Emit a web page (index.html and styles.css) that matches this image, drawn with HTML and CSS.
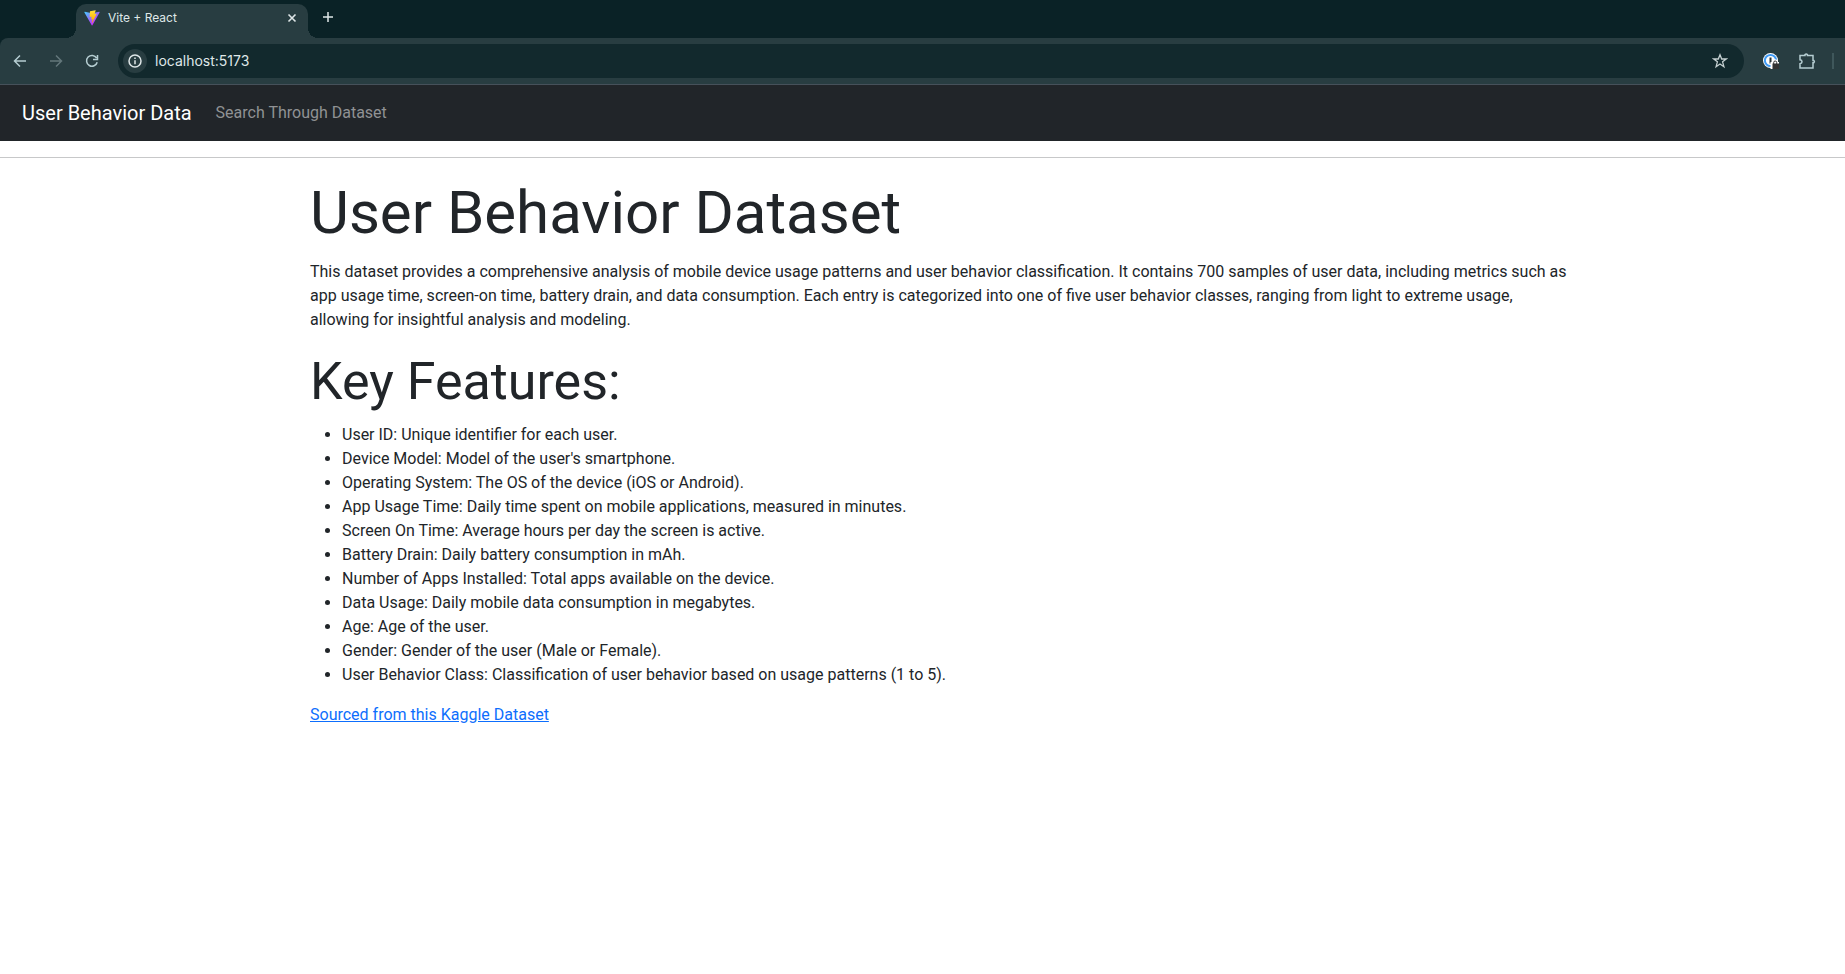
FILE: index.html
```html
<!DOCTYPE html>
<html lang="en">
<head>
<meta charset="utf-8">
<title>Vite + React</title>
<link rel="stylesheet" href="styles.css">
</head>
<body>
<header class="browser">
  <div class="tab-strip">
    <div class="tab">
      <svg class="tab-icon" width="16" height="16" viewBox="0 0 410 404" aria-hidden="true">
        <defs>
          <linearGradient id="v" x1="6" y1="33" x2="235" y2="344" gradientUnits="userSpaceOnUse"><stop stop-color="#41d1ff"/><stop offset="1" stop-color="#bd34fe"/></linearGradient>
          <linearGradient id="b" x1="194" y1="9" x2="236" y2="293" gradientUnits="userSpaceOnUse"><stop stop-color="#ffea83"/><stop offset=".08" stop-color="#ffdd35"/><stop offset="1" stop-color="#ffa800"/></linearGradient>
        </defs>
        <path fill="url(#v)" d="M399.6 59.5 215.6 388.5c-3.8 6.8-13.6 6.9-17.4.1L10.6 59.6c-4.3-7.4 2-16.4 10.4-14.9l184.1 32.9c1.2.2 2.4.2 3.5 0l180.3-32.8c8.4-1.5 14.8 7.4 10.7 14.7Z"/>
        <path fill="url(#b)" d="M293 1.6 156.800 28.200c-2.200.400-3.900 2.300-4 4.600l-8.400 141.500c-.2 3.300 2.900 5.900 6.100 5.200l37.900-8.800c3.600-.8 6.800 2.300 6 5.900l-11.300 55.100c-.8 3.700 2.700 6.900 6.300 5.800l23.400-7.100c3.600-1.100 7.100 2.100 6.300 5.800l-17.900 86.600c-1.100 5.400 6.100 8.400 9.100 3.700l2-3.100 111-221.400c1.800-3.700-1.400-7.900-5.400-7.200l-39 7.600c-3.700.7-6.800-2.700-5.800-6.300l25.500-88.200c1-3.600-2.100-7.100-5.800-6.300Z"/>
      </svg>
      <span class="tab-title">Vite + React</span>
      <button class="tab-close" aria-label="Close tab"><svg width="10" height="10" viewBox="0 0 10 10"><path d="M1.500 1.500l7 7M8.500 1.500l-7 7" stroke="currentColor" stroke-width="1.600" fill="none"/></svg></button>
    </div>
    <button class="new-tab" aria-label="New tab"><svg width="12" height="12" viewBox="0 0 12 12"><path d="M6 1v10M1 6h10" stroke="currentColor" stroke-width="1.500" fill="none"/></svg></button>
  </div>
  <div class="toolbar">
    <div class="history">
      <button class="tool" aria-label="Back"><svg width="16" height="16" viewBox="0 0 16 16"><path d="M14 8H3M8 2.500 2.500 8 8 13.500" /></svg></button>
      <button class="tool tool-off" aria-label="Forward" disabled><svg width="16" height="16" viewBox="0 0 16 16"><path d="M2 8h11M8 2.500 13.500 8 8 13.500" /></svg></button>
      <button class="tool" aria-label="Reload"><svg width="16" height="16" viewBox="0 0 16 16"><path d="M13.200 9.200A5.400 5.400 0 1 1 12.600 5M13.500 2v4.500H9"/></svg></button>
    </div>
    <div class="address">
      <button class="site-info" aria-label="Site information"><svg width="16" height="16" viewBox="0 0 16 16"><circle cx="8" cy="8" r="6" fill="none" stroke="currentColor" stroke-width="1.500"/><path d="M8 7.200v4M8 4.500V6" stroke="currentColor" stroke-width="1.500"/></svg></button>
      <input class="url" type="text" aria-label="Address" value="localhost:5173">
      <button class="star" aria-label="Bookmark this tab"><svg width="16" height="16" viewBox="0 0 16 16"><path d="M8 1.800 9.700 6h4.500l-3.600 2.800 1.300 4.900L8 11l-3.900 2.700 1.300-4.900L1.800 6h4.500Z" fill="none" stroke="currentColor" stroke-width="1.300"/></svg></button>
    </div>
    <div class="extensions">
      <button class="tool" aria-label="Password manager"><svg width="16" height="16" viewBox="0 0 16 16"><circle cx="7.500" cy="7.500" r="7.500" fill="#fff" stroke="none"/><circle cx="7.500" cy="7.500" r="5.600" fill="#fff" stroke="#3f9bf5" stroke-width="2"/><rect x="6.500" y="4.500" width="2" height="6" fill="#26343a" stroke="none"/><path d="M7.500 16V9h1.700a2.600 2.600 0 0 1 5.600 0H16v7Z" fill="#fff" stroke="none"/><path d="M10.700 11V9.500a1.500 1.500 0 0 1 3 0V11" stroke="#333" stroke-width="1"/><rect x="9.500" y="10.500" width="6.500" height="5.500" fill="#333" stroke="none"/></svg></button>
      <button class="tool" aria-label="Extensions"><svg width="18" height="18" viewBox="0 0 18 18"><path d="M2 3.500h5V2.600q1.200-1.200 2.400 0v.9H15v5h.8q1.200 1 0 2.300H15V16H2v-4.300c2.700-.4 2.700-3.500 0-3.900Z"/></svg></button>
      <span class="divider"></span>
    </div>
  </div>
</header>
<nav class="navbar">
  <a class="brand" href="#">User Behavior Data</a>
  <a class="nav-link" href="#search">Search Through Dataset</a>
</nav>
<hr class="rule">
<main class="content">
  <h1 class="title">User Behavior Dataset</h1>
  <p class="lead">This dataset provides a comprehensive analysis of mobile device usage patterns and user behavior classification. It contains 700 samples of user data, including metrics such as app usage time, screen-on time, battery drain, and data consumption. Each entry is categorized into one of five user behavior classes, ranging from light to extreme usage, allowing for insightful analysis and modeling.</p>
  <h2 class="subtitle">Key Features:</h2>
  <ul class="features">
    <li>User ID: Unique identifier for each user.</li>
    <li>Device Model: Model of the user's smartphone.</li>
    <li>Operating System: The OS of the device (iOS or Android).</li>
    <li>App Usage Time: Daily time spent on mobile applications, measured in minutes.</li>
    <li>Screen On Time: Average hours per day the screen is active.</li>
    <li>Battery Drain: Daily battery consumption in mAh.</li>
    <li>Number of Apps Installed: Total apps available on the device.</li>
    <li>Data Usage: Daily mobile data consumption in megabytes.</li>
    <li>Age: Age of the user.</li>
    <li>Gender: Gender of the user (Male or Female).</li>
    <li>User Behavior Class: Classification of user behavior based on usage patterns (1 to 5).</li>
  </ul>
  <a class="source" href="#kaggle">Sourced from this Kaggle Dataset</a>
</main>
</body>
</html>
```
FILE: styles.css
```css
* { box-sizing: border-box; }

body {
  margin: 0;
  background: #fff;
  color: #212529;
  font-family: Roboto, "Liberation Sans", sans-serif;
  font-size: 16px;
  line-height: 24px;
}

button {
  display: flex;
  align-items: center;
  justify-content: center;
  padding: 0;
  border: 0;
  background: none;
  color: inherit;
}

.browser {
  background: #0a2226;
  color: #dfe7e8;
  border-bottom: 1px solid #46515a;
  font-family: Inter, "Liberation Sans", sans-serif;
}

.tab-strip {
  display: flex;
  height: 38px;
  padding: 4px 0 0 76px;
}

.tab {
  position: relative;
  display: flex;
  align-items: center;
  width: 232px;
  height: 34px;
  padding: 0 11px 6px 8px;
  border-radius: 10px 10px 0 0;
  background: #283d41;
}

.tab::before,
.tab::after {
  content: "";
  position: absolute;
  bottom: 0;
  width: 10px;
  height: 10px;
}

.tab::before {
  right: 100%;
  background: radial-gradient(circle at 0 0, transparent 10px, #283d41 10px);
}

.tab::after {
  left: 100%;
  background: radial-gradient(circle at 100% 0, transparent 10px, #283d41 10px);
}

.tab-title {
  flex: 1;
  margin-left: 8px;
  font-size: 12px;
  line-height: 16px;
}

.new-tab {
  width: 24px;
  height: 26px;
  margin-left: 8px;
}

.toolbar {
  display: flex;
  align-items: center;
  height: 46px;
  padding: 0 11px 0 8px;
  border-radius: 8px 0 0 0;
  background: #283d41;
}

.history {
  display: flex;
  gap: 12px;
}

.tool {
  width: 24px;
  height: 24px;
  color: #b5cdd1;
}

.tool svg {
  fill: none;
  stroke: currentColor;
  stroke-width: 1.5;
}

.tool-off { color: #63777a; }

.address {
  display: flex;
  flex: 1;
  align-items: center;
  height: 34px;
  margin-left: 14px;
  padding: 0 12px 0 5px;
  border-radius: 17px;
  background: #12292d;
}

.site-info {
  width: 24px;
  height: 24px;
  border-radius: 12px;
  background: #283d41;
}

.url {
  flex: 1;
  margin: 0 8px;
  padding: 0;
  border: 0;
  outline: 0;
  background: none;
  color: #dfe7e8;
  font-family: inherit;
  font-size: 14px;
  line-height: 20px;
}

.star {
  width: 24px;
  height: 24px;
  color: #c5d0d1;
}

.extensions {
  display: flex;
  align-items: center;
  gap: 12px;
  margin-left: 15px;
}

.divider {
  width: 2px;
  height: 16px;
  margin-left: 1px;
  background: #3f575b;
}

.navbar {
  display: flex;
  align-items: center;
  gap: 24px;
  height: 56px;
  padding: 0 22px;
  background: #212529;
}

.brand {
  color: #fff;
  font-size: 20px;
  line-height: 30px;
  text-decoration: none;
}

.nav-link {
  color: #909294;
  text-decoration: none;
}

.rule {
  margin: 16px 0;
  border: 0;
  border-top: 1px solid #c7c8c9;
}

.content { padding: 0 271px 0 310px; }

.title,
.subtitle {
  margin: 0 0 8px;
  font-weight: 400;
}

.title {
  font-size: 60px;
  line-height: 78px;
}

.subtitle {
  font-size: 52px;
  line-height: 67px;
}

.lead { margin: 0 0 16px; }

.features {
  margin: 0 0 16px;
  padding-left: 32px;
}

.source { color: #0d6efd; }
```
